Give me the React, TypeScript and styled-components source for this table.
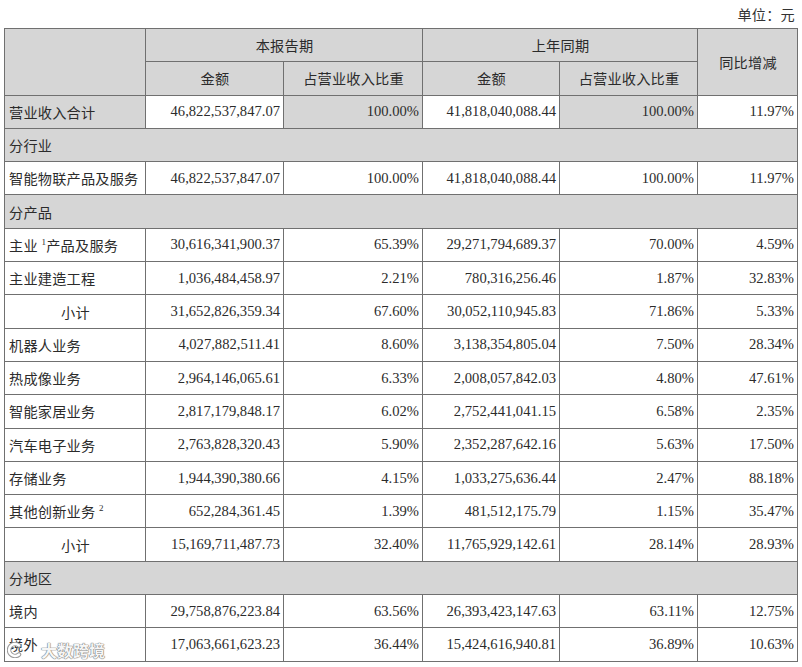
import styled, { createGlobalStyle } from 'styled-components';

interface DataRow {
    label: string;
    sup?: string;
    amount: string;
    pct: string;
    lastAmount: string;
    lastPct: string;
    change: string;
    subtotal?: boolean;
}

type Row = { section: string } | DataRow;

const rows: Row[] = [
    { section: '分行业' },
    { label: '智能物联产品及服务', amount: '46,822,537,847.07', pct: '100.00%', lastAmount: '41,818,040,088.44', lastPct: '100.00%', change: '11.97%' },
    { section: '分产品' },
    { label: '主业', sup: '1', amount: '30,616,341,900.37', pct: '65.39%', lastAmount: '29,271,794,689.37', lastPct: '70.00%', change: '4.59%' },
    { label: '主业建造工程', amount: '1,036,484,458.97', pct: '2.21%', lastAmount: '780,316,256.46', lastPct: '1.87%', change: '32.83%' },
    { label: '小计', subtotal: true, amount: '31,652,826,359.34', pct: '67.60%', lastAmount: '30,052,110,945.83', lastPct: '71.86%', change: '5.33%' },
    { label: '机器人业务', amount: '4,027,882,511.41', pct: '8.60%', lastAmount: '3,138,354,805.04', lastPct: '7.50%', change: '28.34%' },
    { label: '热成像业务', amount: '2,964,146,065.61', pct: '6.33%', lastAmount: '2,008,057,842.03', lastPct: '4.80%', change: '47.61%' },
    { label: '智能家居业务', amount: '2,817,179,848.17', pct: '6.02%', lastAmount: '2,752,441,041.15', lastPct: '6.58%', change: '2.35%' },
    { label: '汽车电子业务', amount: '2,763,828,320.43', pct: '5.90%', lastAmount: '2,352,287,642.16', lastPct: '5.63%', change: '17.50%' },
    { label: '存储业务', amount: '1,944,390,380.66', pct: '4.15%', lastAmount: '1,033,275,636.44', lastPct: '2.47%', change: '88.18%' },
    { label: '其他创新业务', sup: '2', amount: '652,284,361.45', pct: '1.39%', lastAmount: '481,512,175.79', lastPct: '1.15%', change: '35.47%' },
    { label: '小计', subtotal: true, amount: '15,169,711,487.73', pct: '32.40%', lastAmount: '11,765,929,142.61', lastPct: '28.14%', change: '28.93%' },
    { section: '分地区' },
    { label: '境内', amount: '29,758,876,223.84', pct: '63.56%', lastAmount: '26,393,423,147.63', lastPct: '63.11%', change: '12.75%' },
    { label: '境外', amount: '17,063,661,623.23', pct: '36.44%', lastAmount: '15,424,616,940.81', lastPct: '36.89%', change: '10.63%' },
];

export default function App() {
    return (
        <Page>
            <GlobalStyle />
            <Unit><Zh>单位：元</Zh></Unit>
            <Table>
                <colgroup>
                    <col style={{ width: 141 }} />
                    <col style={{ width: 138 }} />
                    <col style={{ width: 139 }} />
                    <col style={{ width: 137 }} />
                    <col style={{ width: 138 }} />
                    <col style={{ width: 100 }} />
                </colgroup>
                <tbody>
                    <tr>
                        <Cell $grey rowSpan={2} />
                        <Cell $grey $align="center" colSpan={2}><Zh>本报告期</Zh></Cell>
                        <Cell $grey $align="center" colSpan={2}><Zh>上年同期</Zh></Cell>
                        <Cell $grey $align="center" rowSpan={2}><Zh>同比增减</Zh></Cell>
                    </tr>
                    <tr>
                        <Cell $grey $align="center"><Zh>金额</Zh></Cell>
                        <Cell $grey $align="center"><Zh>占营业收入比重</Zh></Cell>
                        <Cell $grey $align="center"><Zh>金额</Zh></Cell>
                        <Cell $grey $align="center"><Zh>占营业收入比重</Zh></Cell>
                    </tr>
                    <tr>
                        <Cell $grey><Zh>营业收入合计</Zh></Cell>
                        <Cell $align="right">46,822,537,847.07</Cell>
                        <Cell $grey $align="right">100.00%</Cell>
                        <Cell $align="right">41,818,040,088.44</Cell>
                        <Cell $grey $align="right">100.00%</Cell>
                        <Cell $align="right">11.97%</Cell>
                    </tr>
                    {rows.map((row, i) =>
                        'section' in row ? (
                            <tr key={i}>
                                <Cell $grey colSpan={6}><Zh>{row.section}</Zh></Cell>
                            </tr>
                        ) : (
                            <tr key={i}>
                                <Cell $align={row.subtotal ? 'center' : 'left'}>
                                    {row.label === '主业' && row.sup ? (
                                        <Zh>主业 <Sup>{row.sup}</Sup>产品及服务</Zh>
                                    ) : (
                                        <Zh>{row.label}{row.sup && <> <Sup>{row.sup}</Sup></>}</Zh>
                                    )}
                                </Cell>
                                <Cell $align="right">{row.amount}</Cell>
                                <Cell $align="right">{row.pct}</Cell>
                                <Cell $align="right">{row.lastAmount}</Cell>
                                <Cell $align="right">{row.lastPct}</Cell>
                                <Cell $align="right">{row.change}</Cell>
                            </tr>
                        )
                    )}
                </tbody>
            </Table>
            <Watermark>
                <svg width="16" height="16" viewBox="0 0 16 16">
                    <path d="M12 3.5 A6 6 0 1 0 12 12.5" fill="none" stroke="#999" strokeWidth="4.5" strokeLinecap="round" />
                    <path d="M12 3.5 A6 6 0 1 0 12 12.5" fill="none" stroke="#fff" strokeWidth="2.5" strokeLinecap="round" />
                </svg>
                <span>大数跨境</span>
            </Watermark>
        </Page>
    );
}

const GlobalStyle = createGlobalStyle`
    body {
        margin: 0;
        background: #ffffff;
    }
`;

const Page = styled.div`
    position: relative;
    width: 802px;
    height: 667px;
    padding: 4px 5px 0 4px;
    box-sizing: border-box;
    font-family: 'Liberation Serif', 'Noto Sans CJK SC', serif;
    font-size: 14.6px;
    color: #2b2b2b;
    background: #ffffff;
`;

const Unit = styled.div`
    height: 24px;
    line-height: 22px;
    text-align: right;
    padding-right: 2px;
    color: #333;
`;

const Zh = styled.span`
    font-size: 14.2px;
    letter-spacing: 0.2px;
`;

const Table = styled.table`
    width: 793px;
    border-collapse: collapse;
    table-layout: fixed;
`;

const Cell = styled.td<{ $grey?: boolean; $align?: 'left' | 'center' | 'right' }>`
    height: 33.3px;
    box-sizing: border-box;
    padding: 0 3px 0 4px;
    border: 1.5px solid #707070;
    background: ${p => (p.$grey ? '#d6d6d6' : '#ffffff')};
    text-align: ${p => p.$align || 'left'};
    white-space: nowrap;
    vertical-align: middle;
`;

const Sup = styled.sup`
    font-family: 'Liberation Serif', serif;
    font-size: 9px;
    vertical-align: 6px;
    line-height: 0;
`;

const Watermark = styled.div`
    position: absolute;
    left: 7px;
    bottom: 5px;
    display: flex;
    align-items: center;
    gap: 18px;
    font-family: 'Noto Sans CJK SC', sans-serif;
    font-size: 16px;
    font-weight: 700;
    color: rgba(255, 255, 255, 0.95);
    text-shadow: 0 0 1px #777, 0 0 1px #777, 0 0 1px #777;
    letter-spacing: 0;
`;
